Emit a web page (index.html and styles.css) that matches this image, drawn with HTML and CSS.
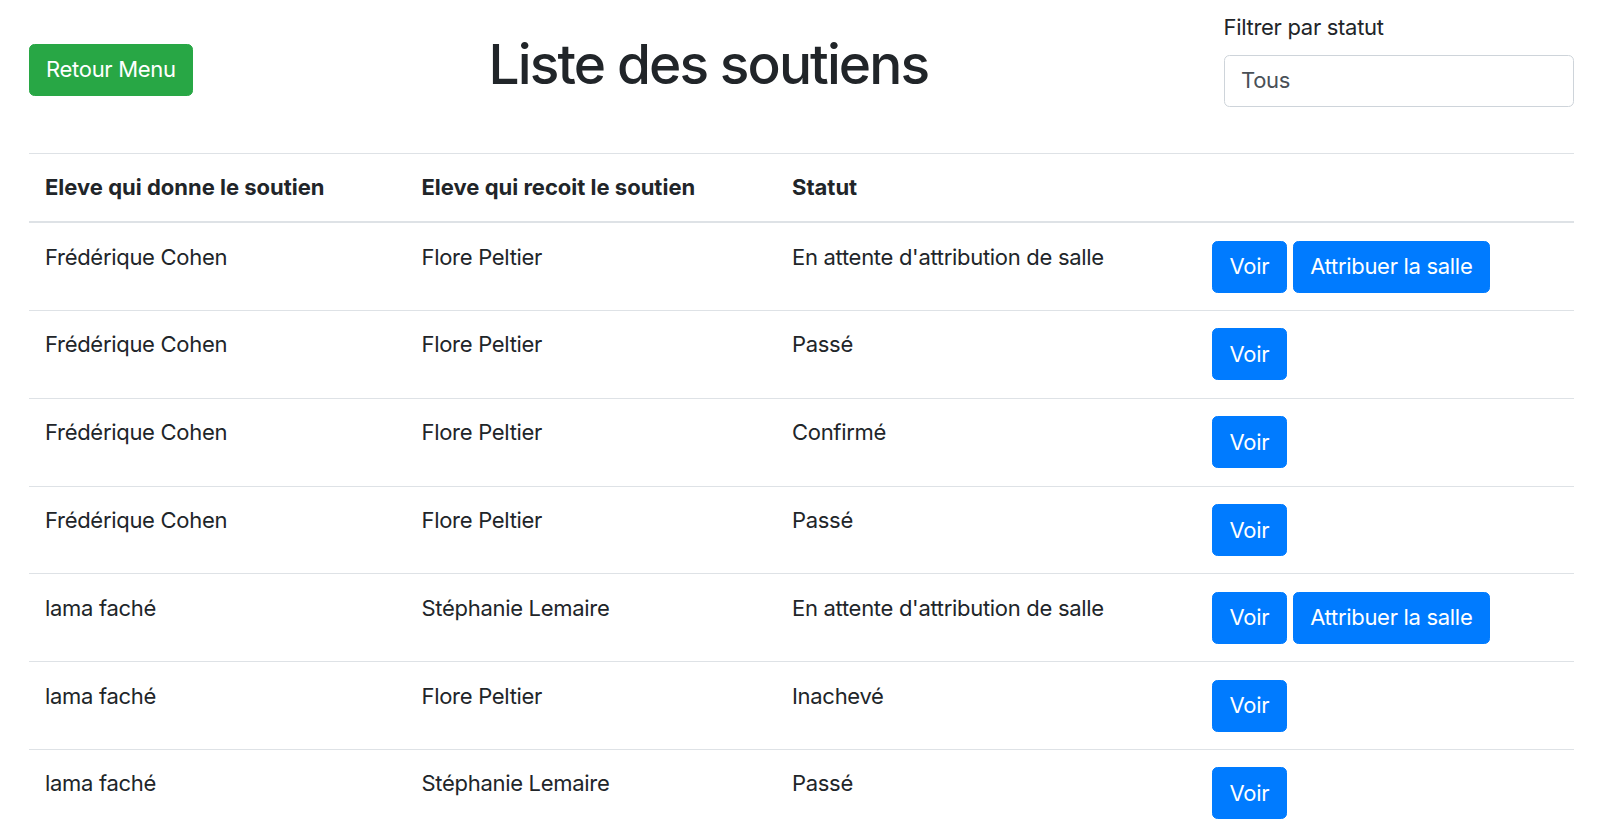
FILE: index.html
```html
<!DOCTYPE html>
<html lang="fr">
<head>
<meta charset="utf-8">
<title>Liste des soutiens</title>
<link rel="stylesheet" href="styles.css">
</head>
<body>
<div class="page">
  <header class="topbar">
    <button class="btn btn-success">Retour Menu</button>
    <h1 class="title">Liste des soutiens</h1>
    <div class="form-group">
      <label class="label" for="statut">Filtrer par statut</label>
      <select id="statut" class="form-control">
        <option>Tous</option>
      </select>
    </div>
  </header>

  <table class="table">
    <colgroup>
      <col class="c1"><col class="c2"><col class="c3"><col class="c4">
    </colgroup>
    <thead>
      <tr>
        <th>Eleve qui donne le soutien</th>
        <th>Eleve qui recoit le soutien</th>
        <th>Statut</th>
        <th></th>
      </tr>
    </thead>
    <tbody>
      <tr>
        <td>Frédérique Cohen</td><td>Flore Peltier</td><td>En attente d'attribution de salle</td>
        <td><div class="actions"><button class="btn btn-primary">Voir</button><button class="btn btn-primary">Attribuer la salle</button></div></td>
      </tr>
      <tr>
        <td>Frédérique Cohen</td><td>Flore Peltier</td><td>Passé</td>
        <td><div class="actions"><button class="btn btn-primary">Voir</button></div></td>
      </tr>
      <tr>
        <td>Frédérique Cohen</td><td>Flore Peltier</td><td>Confirmé</td>
        <td><div class="actions"><button class="btn btn-primary">Voir</button></div></td>
      </tr>
      <tr>
        <td>Frédérique Cohen</td><td>Flore Peltier</td><td>Passé</td>
        <td><div class="actions"><button class="btn btn-primary">Voir</button></div></td>
      </tr>
      <tr>
        <td>lama faché</td><td>Stéphanie Lemaire</td><td>En attente d'attribution de salle</td>
        <td><div class="actions"><button class="btn btn-primary">Voir</button><button class="btn btn-primary">Attribuer la salle</button></div></td>
      </tr>
      <tr>
        <td>lama faché</td><td>Flore Peltier</td><td>Inachevé</td>
        <td><div class="actions"><button class="btn btn-primary">Voir</button></div></td>
      </tr>
      <tr>
        <td>lama faché</td><td>Stéphanie Lemaire</td><td>Passé</td>
        <td><div class="actions"><button class="btn btn-primary">Voir</button></div></td>
      </tr>
    </tbody>
  </table>
</div>
</body>
</html>
```

FILE: styles.css
```css
* { box-sizing: border-box; }

html, body {
  margin: 0;
  padding: 0;
  background: #fff;
}

body {
  font-family: Inter, "Noto Sans", "Liberation Sans", sans-serif;
  font-size: 22px;
  line-height: 1.5;
  color: #212529;
  letter-spacing: -0.3px;
  overflow: hidden;
}

.page {
  padding: 10.5px 26.5px 0 28.5px;
}

.topbar {
  display: flex;
  justify-content: space-between;
  align-items: center;
}

.title {
  margin: 0 0 11px 0;
  font-size: 55px;
  font-weight: 500;
  line-height: 1.2;
  letter-spacing: -1.9px;
  color: #212529;
}

.form-group {
  width: 350px;
  margin-bottom: 22px;
}

.label {
  display: block;
  margin-bottom: 11px;
  line-height: 33px;
}

.form-control {
  display: block;
  width: 100%;
  height: 52px;
  padding: 8.25px 16.5px;
  font-family: inherit;
  font-size: 22px;
  line-height: 33px;
  letter-spacing: -0.3px;
  color: #495057;
  background: #fff;
  border: 1px solid #ced4da;
  border-radius: 5.5px;
  -webkit-appearance: none;
  appearance: none;
}

.btn {
  display: inline-block;
  font-family: inherit;
  font-size: 22px;
  font-weight: 400;
  line-height: 33px;
  letter-spacing: -0.3px;
  padding: 8.5px 16.5px;
  border: 1px solid transparent;
  border-radius: 5.5px;
  color: #fff;
  cursor: pointer;
  white-space: nowrap;
}

.btn-success {
  background: #28a745;
  border-color: #28a745;
}

.btn-primary {
  background: #007bff;
  border-color: #007bff;
}

.table {
  width: 100%;
  margin-top: 24px;
  border-collapse: collapse;
  table-layout: fixed;
  color: #212529;
}

.c1 { width: 376.5px; }
.c2 { width: 370.5px; }
.c3 { width: 420px; }
.c4 { width: 378px; }

.table th,
.table td {
  padding: 17.4px 16.5px;
  text-align: left;
  vertical-align: top;
  border-top: 1px solid #dee2e6;
  line-height: 33px;
}

.table th {
  font-weight: 700;
  letter-spacing: 0;
  border-bottom: 2px solid #dee2e6;
  vertical-align: bottom;
}

.actions {
  display: flex;
  gap: 6px;
}
```
